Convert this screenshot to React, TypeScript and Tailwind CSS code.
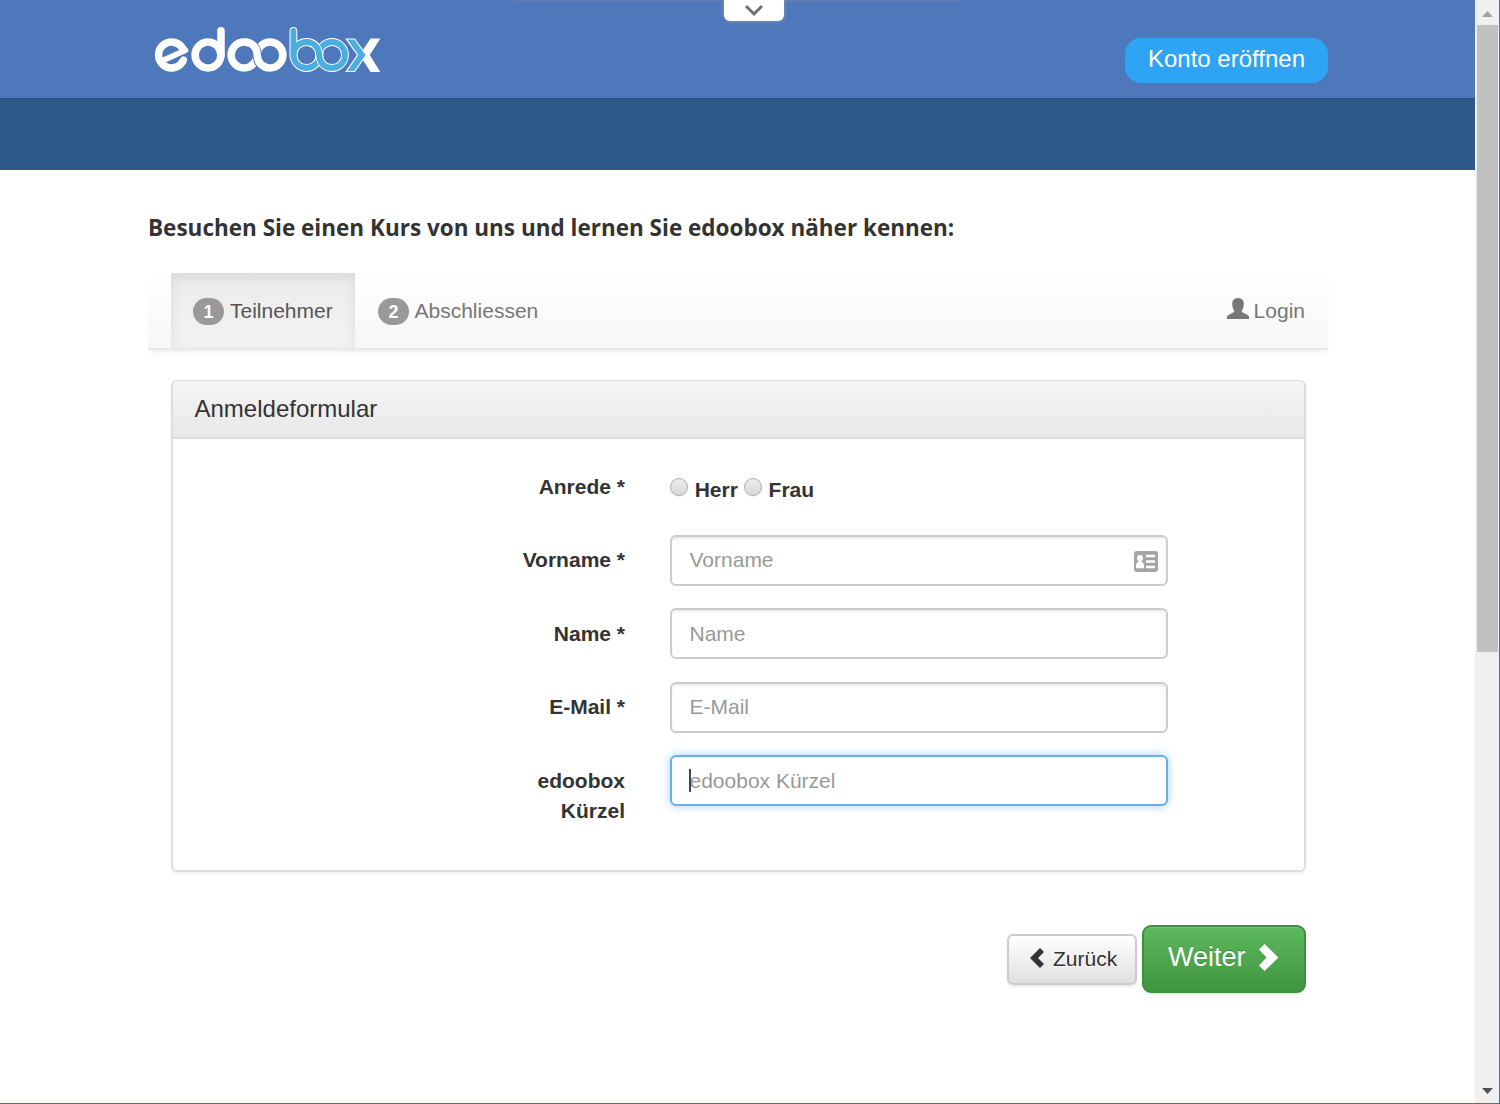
import type { ReactNode } from "react";

function Logo() {
  return (
    <svg className="block" width="232" height="52" viewBox="152 24 232 52" fill="none" aria-label="edoobox">
      <g stroke="#ffffff" strokeWidth="7.500">
        <path d="M183.300 60.200A12.900 12.900 0 1 1 183.300 49.800" />
        <path d="M185.600 50.200L161 61.400" strokeWidth="5.600" strokeLinecap="round" />
        <path d="M183.600 59.800L182.800 61.300" strokeLinecap="round" strokeWidth="6.800" />
        <circle cx="208" cy="55" r="12.900" />
        <path d="M221 30.800V55" strokeLinecap="round" />
        <circle cx="244" cy="55" r="12.900" />
        <circle cx="270" cy="55" r="12.900" />
      </g>
      <path d="M249 43C256 46 257 51 257.2 55C257.4 59 259 64 264 66.6" stroke="#4f77bb" strokeWidth="9.400" />
      <path d="M246 42C255.500 43.500 257 51 257.2 55C257.4 59 259 66 268 68" stroke="#ffffff" strokeWidth="7.500" />
      <path d="M359.500 55L370.600 38.400H380.300L369.800 55L380.300 72H370.600Z" fill="#ffffff" />
      <path
        d="M346.300 39H354.600L366.300 55L354.600 71.500H346.300L357.600 55Z"
        fill="#4aaee2"
        stroke="#ffffff"
        strokeWidth="1.200"
      />
      <g stroke="#ffffff" strokeWidth="7.800">
        <path d="M293.400 31V55" strokeLinecap="round" />
        <circle cx="306.500" cy="55" r="13" />
        <circle cx="332" cy="55" r="13" />
      </g>
      <g stroke="#4aaee2" strokeWidth="5.800">
        <path d="M293.400 31V55" strokeLinecap="round" />
        <circle cx="306.500" cy="55" r="13" />
        <circle cx="332" cy="55" r="13" />
      </g>
      <path d="M310 42.500C318 45 319 51 319.200 55C319.400 59 321 65 328 67.500" stroke="#ffffff" strokeWidth="7.600" />
      <path d="M308 42C317.500 44 319 51 319.200 55C319.400 59 321 66 330 68" stroke="#4aaee2" strokeWidth="5.800" />
    </svg>
  );
}

function Badge({ children }: { children: ReactNode }) {
  return (
    <span className="mr-1.5 mt-0.5 flex h-[27px] w-[31px] items-center justify-center rounded-[14px] bg-[#999999] pt-px text-lg font-bold leading-none text-white">
      {children}
    </span>
  );
}

function Row({ label, required, children }: { label: string; required?: boolean; children: ReactNode }) {
  return (
    <div className="flex h-[73.500px] items-start">
      <div className="w-[130px] shrink-0 whitespace-pre-line pt-[10.200px] text-right font-bold leading-[30px]">
        {label}
        {required && " *"}
      </div>
      <div className="ml-[45px]">{children}</div>
    </div>
  );
}

function Field({ placeholder, focused, children }: { placeholder: string; focused?: boolean; children?: ReactNode }) {
  return (
    <div
      className={
        focused
          ? "relative flex h-[51px] w-[498px] items-center rounded-[6px] border-2 border-[#66afe9] bg-white shadow-[inset_0_1px_2px_rgba(0,0,0,0.075),0_0_10px_rgba(102,175,233,0.6)]"
          : "relative flex h-[51px] w-[498px] items-center rounded-[6px] border-2 border-[#cccccc] bg-white shadow-[inset_0_2px_2px_rgba(0,0,0,0.075)]"
      }
    >
      <input
        className="h-full w-full bg-transparent pb-[0.700px] pl-[17.500px] text-[21px] outline-none placeholder:text-[#999999]"
        placeholder={placeholder}
      />
      {focused && <span className="absolute left-[17px] top-3 h-[23px] w-[2px] bg-[#444444]" />}
      {children}
    </div>
  );
}

function ContactCardIcon() {
  return (
    <svg className="absolute right-2 top-[14px]" width="24" height="21" viewBox="0 0 24 21">
      <rect width="24" height="21" rx="3" fill="#a5a5a5" />
      <circle cx="6" cy="7" r="3.100" fill="#fff" />
      <path d="M2 17.300V14.500Q2 11.500 4.500 10.800L4.800 9H7.200L7.500 10.800Q10 11.500 10 14.500V17.300Z" fill="#fff" />
      <path d="M12 5H21M12 10.500H21M12 16H21" stroke="#fff" strokeWidth="2.400" />
    </svg>
  );
}

function Radio({ label }: { label: string }) {
  return (
    <label className="flex items-start">
      <span className="mt-[3px] h-[18px] w-[18px] rounded-full border border-[#adadad] bg-linear-to-b from-[#eeeeee] to-[#d8d8d8] shadow-[0_1px_1px_rgba(0,0,0,0.06)]" />
      <span className="ml-[6.700px] font-bold leading-[30px]">{label}</span>
    </label>
  );
}

function Scrollbar() {
  return (
    <div className="flex h-[1103px] w-6 shrink-0 flex-col items-center bg-[#f0f0f0]">
      <div className="flex h-[25px] items-center">
        <svg width="11" height="6" viewBox="0 0 11 6" className="mt-[3px]">
          <path d="M0 6L5.500 0L11 6Z" fill="#a3a3a3" />
        </svg>
      </div>
      <div className="h-[627px] w-[21px] bg-[#c1c1c1]" />
      <svg width="11" height="6" viewBox="0 0 11 6" className="mb-[9px] mt-auto">
        <path d="M0 0L5.500 6L11 0Z" fill="#505050" />
      </svg>
    </div>
  );
}

export default function App() {
  return (
    <div className="relative flex h-[1104px] w-[1500px] overflow-hidden border-b border-r border-[#1e7fcb] bg-white font-['Liberation_Sans',Arial,sans-serif] text-[21px] text-[#333333]">
      <div className="w-[1475px] shrink-0">
        <header className="flex h-[98px] items-start justify-between bg-[#4f77bb] pl-[152px] pr-[147px]">
          <div className="pt-6">
            <Logo />
          </div>
          <button className="mt-[38px] h-[45px] w-[203px] rounded-[16px] bg-[#2fa4f4] pb-[3px] text-2xl leading-none text-white">
            Konto eröffnen
          </button>
        </header>
        <div className="h-[72px] border-t border-[#285180] bg-[#2d5888]" />

        <main className="ml-[148px] w-[1180px]">
          <h1 className="pt-[41px] whitespace-nowrap font-['Open_Sans',sans-serif] text-[22.500px] font-bold leading-[34px]">
            Besuchen Sie einen Kurs von uns und lernen Sie edoobox näher kennen:
          </h1>

          <nav className="mt-7 flex h-[77px] border-b-2 border-[#e7e7e7] bg-linear-to-b from-white to-[#f7f7f7] px-[23px] text-[#777777] shadow-[0_5px_6px_-3px_rgba(0,0,0,0.08)]">
            <div className="flex w-[184px] items-center bg-linear-to-b from-[#ebebeb] to-[#f3f3f3] pl-[22px] text-[#555555] shadow-[inset_0_4px_13px_rgba(0,0,0,0.08)]">
              <Badge>1</Badge>
              <span>Teilnehmer</span>
            </div>
            <div className="flex items-center pl-[23px]">
              <Badge>2</Badge>
              <span className="-ml-[0.500px]">Abschliessen</span>
            </div>
            <div className="ml-auto flex items-center">
              <svg width="22" height="21" viewBox="0 0 22 21" className="mb-1 mr-[5px]">
                <path
                  d="M0 21V18.800Q0 18 1 17.300L6.300 14.500Q8 13.800 7 12.300Q5.200 10 5.200 6Q5.200 0 11 0T16.800 6Q16.800 10 15 12.300Q14 13.800 15.700 14.500L21 17.300Q22 18 22 18.800V21Z"
                  fill="#777777"
                />
              </svg>
              <span>Login</span>
            </div>
          </nav>

          <section className="mx-[23px] mt-[30px] h-[492px] w-[1135px] rounded-[6px] border-2 border-t border-[#dddddd] bg-white shadow-[0_2px_3px_rgba(0,0,0,0.05)]">
            <h2 className="h-[58px] rounded-t-[5px] border-b-2 border-[#dddddd] bg-linear-to-b from-[#f5f5f5] to-[#e8e8e8] pl-[21.500px] text-2xl leading-[56px]">
              Anmeldeformular
            </h2>
            <form className="pl-[322px] pt-[22.400px]">
              <Row label="Anrede" required>
                <div className="flex gap-[6px] pt-[13.600px]">
                  <Radio label="Herr" />
                  <Radio label="Frau" />
                </div>
              </Row>
              <Row label="Vorname" required>
                <Field placeholder="Vorname">
                  <ContactCardIcon />
                </Field>
              </Row>
              <Row label="Name" required>
                <Field placeholder="Name" />
              </Row>
              <Row label="E-Mail" required>
                <Field placeholder="E-Mail" />
              </Row>
              <Row label={"edoobox\nKürzel"}>
                <Field placeholder="edoobox Kürzel" focused />
              </Row>
            </form>
          </section>

          <div className="mr-[22px] mt-[53px] flex justify-end gap-[5px]">
            <button className="mt-[9px] flex h-[51px] w-[130px] items-center rounded-[6px] border-2 border-[#cccccc] bg-linear-to-b from-white to-[#e0e0e0] pb-0.5 pl-[21px] shadow-[0_2px_2px_rgba(0,0,0,0.075)] [text-shadow:0_1px_0_#fff]">
              <svg width="14" height="20" viewBox="0 0 14 20" className="mb-[2px] mr-[9px]">
                <path d="M0 10L10 0L14 4L8 10L14 16L10 20Z" fill="#333333" />
              </svg>
              Zurück
            </button>
            <button className="flex h-[68px] w-[164px] items-center rounded-[9px] border-2 border-[#3e8f3e] bg-linear-to-b from-[#5cb85c] to-[#419641] pb-[3px] pl-6 text-[27px] text-white shadow-[inset_0_1px_0_rgba(255,255,255,0.15),0_2px_2px_rgba(0,0,0,0.075)] [text-shadow:0_-1px_0_rgba(0,0,0,0.2)]">
              Weiter
              <svg width="20" height="27" viewBox="0 0 20 27" className="ml-[13px]">
                <path d="M0 21.500L7.500 13.500L0 5.500L5.500 0L19.500 13.500L5.500 27Z" fill="#ffffff" />
              </svg>
            </button>
          </div>
        </main>
      </div>

      <Scrollbar />

      <div className="absolute left-[516px] top-[-5px] h-1 w-[446px] shadow-[0_0_4px_rgba(180,180,150,0.6)]" />
      <div className="absolute left-[724px] top-0 flex h-[21px] w-[60px] justify-center rounded-b-[6px] bg-white shadow-[0_0_4px_rgba(200,190,150,0.5)]">
        <svg width="20" height="13" viewBox="0 0 20 13" className="mt-[4px]">
          <path d="M2 2L10 10L18 2" fill="none" stroke="#707070" strokeWidth="3" />
        </svg>
      </div>
    </div>
  );
}
